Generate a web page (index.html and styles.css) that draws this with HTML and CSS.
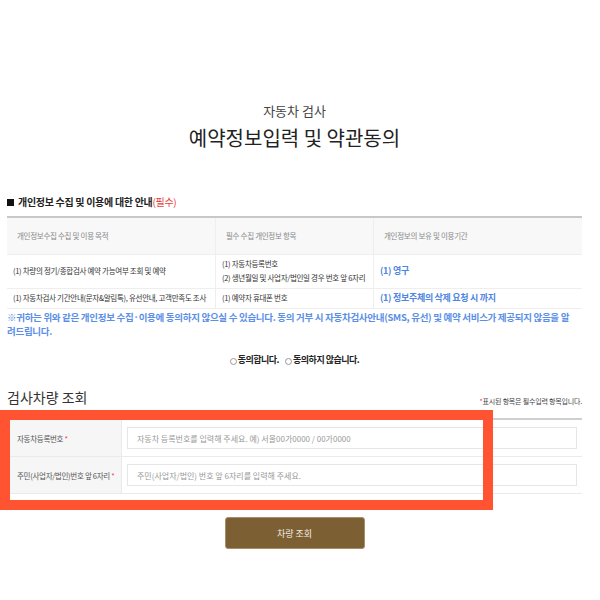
FILE: index.html
```html
<html>
    <head>
        <meta charset="utf-8">
        <meta name="viewport" content="width=device-width, initial-scale=1.0">
        <title>자동차 검사</title>
        <link rel="stylesheet" href="styles.css">
    </head>
    <body>
        <div class="page">
            <div class="title">
                <p class="sub">자동차 검사</p>
                <h1>예약정보입력 및 약관동의</h1>
            </div>

            <h3 class="section"><span class="sq"></span>개인정보 수집 및 이용에 대한 안내<span class="red">(필수)</span></h3>
            <table class="terms">
                <tr>
                    <th class="c1">개인정보수집 수집 및 이용 목적</th>
                    <th class="c2">필수 수집 개인정보 항목</th>
                    <th class="c3">개인정보의 보유 및 이용기간</th>
                </tr>
                <tr class="r1">
                    <td>(1) 차량의 정기/종합검사 예약 가능여부 조회 및 예약</td>
                    <td>(1) 자동차등록번호<br>(2) 생년월일 및 사업자/법인일 경우 번호 앞 6자리</td>
                    <td class="blue">(1) 영구</td>
                </tr>
                <tr class="r2">
                    <td>(1) 자동차검사 기간안내(문자&amp;알림톡), 유선안내, 고객만족도 조사</td>
                    <td>(1) 예약자 휴대폰 번호</td>
                    <td class="blue">(1) 정보주체의 삭제 요청 시 까지</td>
                </tr>
            </table>
            <p class="notice">※귀하는 위와 같은 개인정보 수집·이용에 동의하지 않으실 수 있습니다. 동의 거부 시 자동차검사안내(SMS, 유선) 및 예약 서비스가 제공되지 않음을 알<br>려드립니다.</p>

            <div class="agree">
                <label><span class="radio"></span>동의합니다.</label>
                <label><span class="radio"></span>동의하지 않습니다.</label>
            </div>

            <div class="form-head">
                <h2>검사차량 조회</h2>
                <span class="req"><span class="red">*</span>표시된 항목은 필수입력 항목입니다.</span>
            </div>
            <div class="form">
                <div class="row">
                    <div class="label">자동차등록번호&nbsp;<span class="red">*</span></div>
                    <div class="field"><div class="input">자동차 등록번호를 입력해 주세요. 예) 서울00가0000 / 00가0000</div></div>
                </div>
                <div class="row">
                    <div class="label">주민(사업자/법인)번호 앞 6자리&nbsp;<span class="red">*</span></div>
                    <div class="field"><div class="input">주민(사업자/법인) 번호 앞 6자리를 입력해 주세요.</div></div>
                </div>
            </div>

            <div class="actions">
                <button type="button">차량 조회</button>
            </div>
        </div>
        <div class="highlight"></div>
    </body>
</html>
```

FILE: styles.css
```css
body {
    margin: 0;
    background-color: white;
    color: #333;
    font-family: "Noto Sans CJK KR", "Noto Sans", sans-serif;
}

.page {
    width: 575px;
    margin-left: 7px;
}

.title {
    text-align: center;
    padding-top: 102px;
}

.sub {
    margin: 0;
    font-size: 13px;
    line-height: 18px;
    color: #444;
}

h1 {
    margin: 4px 0 0;
    font-size: 20px;
    line-height: 28px;
    font-weight: normal;
    color: #222;
}

.section {
    margin: 43px 0 0;
    font-size: 10px;
    line-height: 14px;
    font-weight: bold;
    letter-spacing: -0.3px;
    color: #222;
    display: flex;
    align-items: center;
}

.sq {
    width: 7px;
    height: 7px;
    background-color: #111;
    margin-right: 4px;
}

.red {
    color: #e9403b;
    font-weight: normal;
}

.terms {
    width: 100%;
    margin-top: 7px;
    border-collapse: collapse;
    border-top: 2px solid #c8c8c8;
    font-size: 7.5px;
    letter-spacing: -0.3px;
}

.terms th {
    height: 37px;
    background-color: #f8f8f8;
    color: #888;
    font-weight: normal;
    text-align: left;
    padding: 0 0 0 10px;
}

.terms td {
    padding: 0 0 0 6px;
    border-top: 1px solid #eee;
    color: #333;
    line-height: 14px;
}

.terms th + th,
.terms td + td {
    border-left: 1px solid #eee;
}

.terms .c1 {
    width: 198px;
}

.terms .c2 {
    width: 147px;
}

.r1 td {
    height: 34px;
}

.r2 td {
    height: 20px;
}

.terms td.blue {
    color: #4f86e3;
    font-weight: bold;
    font-size: 9px;
}

.notice {
    margin: 0;
    border-top: 1px solid #eee;
    padding-top: 1px;
    font-size: 9.5px;
    line-height: 14px;
    font-weight: bold;
    letter-spacing: -0.3px;
    color: #5b8fe6;
}

.agree {
    margin-top: 15px;
    display: flex;
    justify-content: center;
    gap: 6px;
    font-size: 9px;
    font-weight: bold;
    letter-spacing: -0.5px;
    color: #222;
}

.agree label {
    display: flex;
    align-items: center;
}

.radio {
    width: 5px;
    height: 5px;
    border: 1px solid #999;
    border-radius: 50%;
    margin-right: 1px;
    margin-top: 3px;
}

.form-head {
    margin-top: 21px;
    display: flex;
    justify-content: space-between;
    align-items: flex-end;
}

.form-head h2 {
    margin: 0;
    font-size: 14px;
    line-height: 20px;
    font-weight: normal;
    color: #333;
}

.req {
    font-size: 7px;
    letter-spacing: -0.2px;
    color: #444;
    margin-bottom: 1px;
}

.form {
    margin-top: 11px;
    border-top: 2px solid #cfcfcf;
}

.row {
    display: flex;
    height: 36px;
    border-bottom: 1px solid #eaeaea;
}

.label {
    width: 115px;
    flex-shrink: 0;
    background-color: #f6f6f6;
    border-right: 1px solid #eaeaea;
    font-size: 7.5px;
    letter-spacing: -0.3px;
    color: #555;
    display: flex;
    align-items: center;
    padding-left: 10px;
    box-sizing: border-box;
}

.field {
    flex: 1;
    display: flex;
    align-items: center;
    padding: 0 5px;
}

.input {
    flex: 1;
    height: 20px;
    border: 1px solid #e6e6e6;
    font-size: 8px;
    color: #999;
    display: flex;
    align-items: center;
    padding-left: 9px;
}

.actions {
    margin-top: 23px;
    display: flex;
    justify-content: center;
}

button {
    width: 140px;
    height: 32px;
    background-color: #7d5f34;
    border: 1px solid #a88f6c;
    border-radius: 3px;
    color: #f2ece2;
    font-family: "Noto Sans CJK KR", sans-serif;
    font-size: 9px;
}

.highlight {
    position: absolute;
    left: 0;
    top: 410px;
    width: 473px;
    height: 80px;
    border: 10px solid #ff5331;
}
```
